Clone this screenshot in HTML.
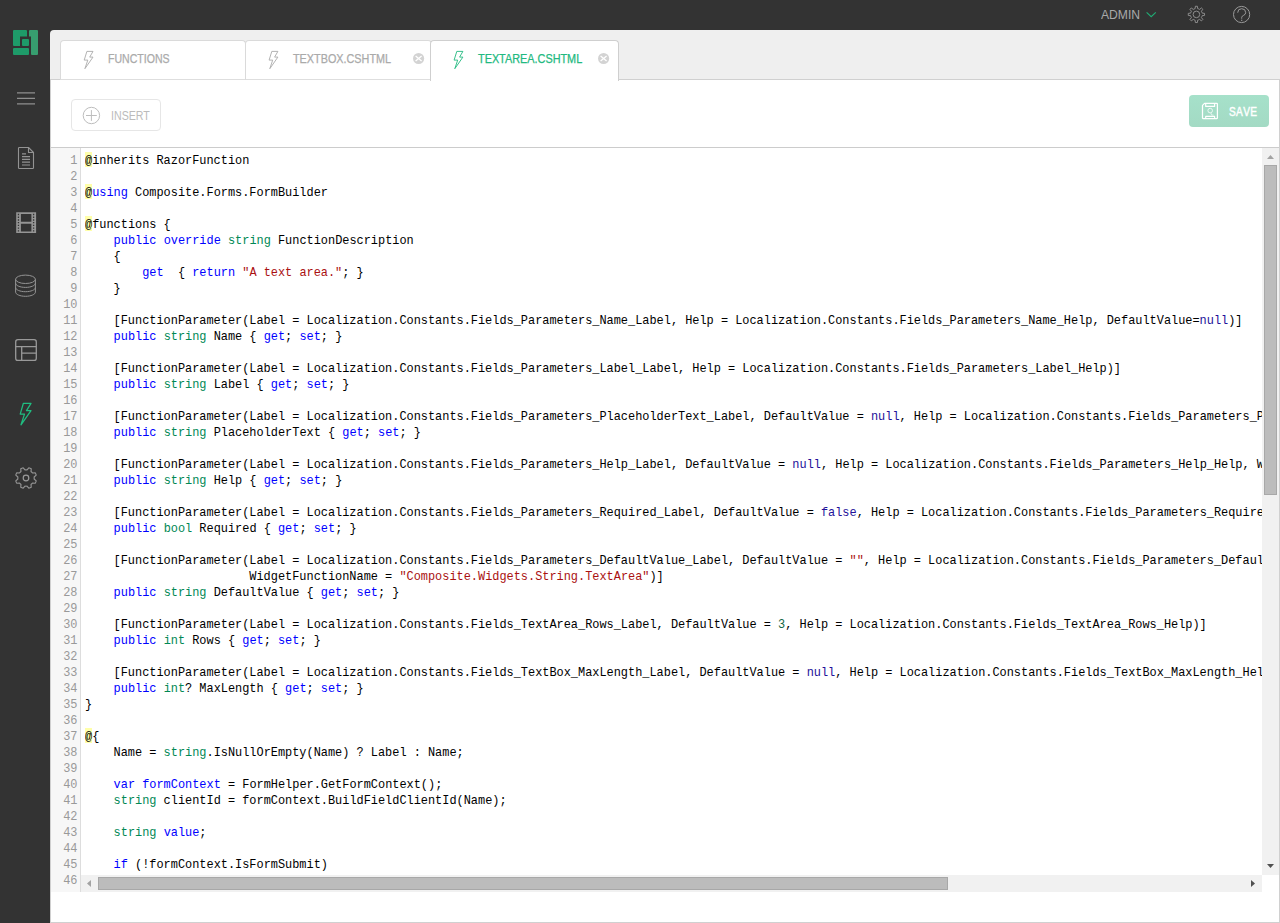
<!DOCTYPE html>
<html lang="en">
<head>
<meta charset="utf-8">
<title>C1 Console - TextArea.cshtml</title>
<style>
*{box-sizing:border-box;margin:0;padding:0}
html,body{width:1280px;height:923px;overflow:hidden;background:#333;font-family:"Liberation Sans",sans-serif}
#app{position:relative;width:1280px;height:923px;background:#333;overflow:hidden}
svg.ov{position:absolute;left:0;top:0;pointer-events:none}
.nar{display:inline-block;transform-origin:0 50%;white-space:nowrap}

/* top bar */
#admin{position:absolute;left:1101px;top:8px;font-size:12.5px;line-height:15px;color:#a9a9a9}
#admin .nar{transform:scaleX(.97)}

/* main area */
#main{position:absolute;left:50px;top:30px;width:1230px;height:893px;background:#efefef;border-top-left-radius:4px}
.tab{position:absolute;top:10px;height:40px;background:#fff;border:1px solid #dadada;border-bottom-color:#dedede;z-index:3;border-radius:4px 4px 0 0;font-size:12px;color:#aaa}
.tab .lbl{position:absolute;top:11px;line-height:14px;-webkit-text-stroke:.25px currentColor}
.tab .lbl .nar{transform:scaleX(.88)}
#t1{left:10px;width:186px}
#t2{left:195px;width:187px}
#t3{left:380px;width:189px;height:41px;color:#22b980;border-color:#cfcfcf;border-bottom:none;z-index:4}
#panel{position:absolute;left:0;top:49px;width:1230px;height:844px;background:#fff;border:1px solid #d0d0d0;z-index:2}

/* toolbar */
#insert{position:absolute;left:20px;top:19px;width:90px;height:32px;border:1px solid #e6e6e6;border-radius:4px;color:#bbb;font-size:12.5px}
#insert .lbl{position:absolute;left:39px;top:9px;line-height:15px}
#insert .nar{transform:scaleX(.852)}
#save{position:absolute;left:1138px;top:15px;width:80px;height:32px;border-radius:4px;background:linear-gradient(#a6e1ca,#a3dac4);color:#fff;font-size:12.5px;-webkit-text-stroke:.45px #fff}
#save .lbl{position:absolute;left:40px;top:10px;line-height:15px}
#save .nar{transform:scaleX(.81);letter-spacing:.4px;font-kerning:none}

/* editor */
#editor{position:absolute;left:0;top:67px;width:1228px;height:745px;border-top:1px solid #ccc;background:#fff;overflow:hidden;
  font-family:"Liberation Mono",monospace;font-size:11.917px;line-height:16px}
#gutter{position:absolute;left:0;top:0;width:30px;height:744px;background:#f7f7f7;border-right:1px solid #ddd}
#nums{position:absolute;left:0;top:5px;width:26.5px;text-align:right;color:#999}
#nums div{height:16px}
#code{position:absolute;left:34px;top:0;padding-top:5px;width:1177px;height:727px;overflow:hidden;color:#000}
.ln{height:16px;white-space:pre}
.k,.d{color:#00f}.t{color:#085}.s{color:#a11}.a{color:#219}.n{color:#164}
.at{background:linear-gradient(#ffa,#ffa) no-repeat 0 0/100% 15px;padding-top:2px}
#vs{z-index:2;position:absolute;left:1211px;top:0;width:17px;height:727px;background:#f1f1f1}
#vs .th{position:absolute;left:2px;top:17px;width:13px;height:330px;background:#bcbcbc;border:1px solid #a8a8a8}
#hs{z-index:2;position:absolute;left:30px;top:727px;width:1181px;height:17px;background:#f1f1f1}
#hs .th{position:absolute;left:17px;top:2px;width:850px;height:13px;background:#bcbcbc;border:1px solid #a8a8a8}
</style>
</head>
<body>
<div id="app">

<div id="admin"><span class="nar">ADMIN</span></div>

<div id="main">
  <div class="tab" id="t1"><div class="lbl" style="left:47px"><span class="nar">FUNCTIONS</span></div></div>
  <div class="tab" id="t2"><div class="lbl" style="left:47px"><span class="nar" style="transform:scaleX(.902)">TEXTBOX.CSHTML</span></div></div>
  <div class="tab" id="t3"><div class="lbl" style="left:47px"><span class="nar" style="transform:scaleX(.905)">TEXTAREA.CSHTML</span></div></div>
  <div id="panel">
    <div id="insert"><div class="lbl"><span class="nar">INSERT</span></div></div>
    <div id="save"><div class="lbl"><span class="nar">SAVE</span></div></div>
    <div id="editor">
      <div id="gutter"><div id="nums">
<div>1</div>
<div>2</div>
<div>3</div>
<div>4</div>
<div>5</div>
<div>6</div>
<div>7</div>
<div>8</div>
<div>9</div>
<div>10</div>
<div>11</div>
<div>12</div>
<div>13</div>
<div>14</div>
<div>15</div>
<div>16</div>
<div>17</div>
<div>18</div>
<div>19</div>
<div>20</div>
<div>21</div>
<div>22</div>
<div>23</div>
<div>24</div>
<div>25</div>
<div>26</div>
<div>27</div>
<div>28</div>
<div>29</div>
<div>30</div>
<div>31</div>
<div>32</div>
<div>33</div>
<div>34</div>
<div>35</div>
<div>36</div>
<div>37</div>
<div>38</div>
<div>39</div>
<div>40</div>
<div>41</div>
<div>42</div>
<div>43</div>
<div>44</div>
<div>45</div>
<div>46</div>
      </div></div>
      <div id="code">
<div class="ln"><span class="at">@</span>inherits RazorFunction</div>
<div class="ln">&nbsp;</div>
<div class="ln"><span class="at">@</span><span class="k">using</span> Composite.Forms.FormBuilder</div>
<div class="ln">&nbsp;</div>
<div class="ln"><span class="at">@</span>functions {</div>
<div class="ln">    <span class="k">public</span> <span class="k">override</span> <span class="t">string</span> FunctionDescription</div>
<div class="ln">    {</div>
<div class="ln">        <span class="k">get</span>  { <span class="k">return</span> <span class="s">"A text area."</span>; }</div>
<div class="ln">    }</div>
<div class="ln">&nbsp;</div>
<div class="ln">    [FunctionParameter(Label = Localization.Constants.Fields_Parameters_Name_Label, Help = Localization.Constants.Fields_Parameters_Name_Help, DefaultValue=<span class="a">null</span>)]</div>
<div class="ln">    <span class="k">public</span> <span class="t">string</span> Name { <span class="k">get</span>; <span class="k">set</span>; }</div>
<div class="ln">&nbsp;</div>
<div class="ln">    [FunctionParameter(Label = Localization.Constants.Fields_Parameters_Label_Label, Help = Localization.Constants.Fields_Parameters_Label_Help)]</div>
<div class="ln">    <span class="k">public</span> <span class="t">string</span> Label { <span class="k">get</span>; <span class="k">set</span>; }</div>
<div class="ln">&nbsp;</div>
<div class="ln">    [FunctionParameter(Label = Localization.Constants.Fields_Parameters_PlaceholderText_Label, DefaultValue = <span class="a">null</span>, Help = Localization.Constants.Fields_Parameters_PlaceholderText_Help)]</div>
<div class="ln">    <span class="k">public</span> <span class="t">string</span> PlaceholderText { <span class="k">get</span>; <span class="k">set</span>; }</div>
<div class="ln">&nbsp;</div>
<div class="ln">    [FunctionParameter(Label = Localization.Constants.Fields_Parameters_Help_Label, DefaultValue = <span class="a">null</span>, Help = Localization.Constants.Fields_Parameters_Help_Help, WidgetFunctionName = <span class="s">"Composite.Widgets.String.TextArea"</span>)]</div>
<div class="ln">    <span class="k">public</span> <span class="t">string</span> Help { <span class="k">get</span>; <span class="k">set</span>; }</div>
<div class="ln">&nbsp;</div>
<div class="ln">    [FunctionParameter(Label = Localization.Constants.Fields_Parameters_Required_Label, DefaultValue = <span class="a">false</span>, Help = Localization.Constants.Fields_Parameters_Required_Help)]</div>
<div class="ln">    <span class="k">public</span> <span class="t">bool</span> Required { <span class="k">get</span>; <span class="k">set</span>; }</div>
<div class="ln">&nbsp;</div>
<div class="ln">    [FunctionParameter(Label = Localization.Constants.Fields_Parameters_DefaultValue_Label, DefaultValue = <span class="s">""</span>, Help = Localization.Constants.Fields_Parameters_DefaultValue_Help,</div>
<div class="ln">                       WidgetFunctionName = <span class="s">"Composite.Widgets.String.TextArea"</span>)]</div>
<div class="ln">    <span class="k">public</span> <span class="t">string</span> DefaultValue { <span class="k">get</span>; <span class="k">set</span>; }</div>
<div class="ln">&nbsp;</div>
<div class="ln">    [FunctionParameter(Label = Localization.Constants.Fields_TextArea_Rows_Label, DefaultValue = <span class="n">3</span>, Help = Localization.Constants.Fields_TextArea_Rows_Help)]</div>
<div class="ln">    <span class="k">public</span> <span class="t">int</span> Rows { <span class="k">get</span>; <span class="k">set</span>; }</div>
<div class="ln">&nbsp;</div>
<div class="ln">    [FunctionParameter(Label = Localization.Constants.Fields_TextBox_MaxLength_Label, DefaultValue = <span class="a">null</span>, Help = Localization.Constants.Fields_TextBox_MaxLength_Help)]</div>
<div class="ln">    <span class="k">public</span> <span class="t">int</span>? MaxLength { <span class="k">get</span>; <span class="k">set</span>; }</div>
<div class="ln">}</div>
<div class="ln">&nbsp;</div>
<div class="ln"><span class="at">@</span>{</div>
<div class="ln">    Name = <span class="t">string</span>.IsNullOrEmpty(Name) ? Label : Name;</div>
<div class="ln">&nbsp;</div>
<div class="ln">    <span class="k">var</span> <span class="d">formContext</span> = FormHelper.GetFormContext();</div>
<div class="ln">    <span class="t">string</span> clientId = formContext.BuildFieldClientId(Name);</div>
<div class="ln">&nbsp;</div>
<div class="ln">    <span class="t">string</span> <span class="d">value</span>;</div>
<div class="ln">&nbsp;</div>
<div class="ln">    <span class="k">if</span> (!formContext.IsFormSubmit)</div>
<div class="ln">    {</div>
      </div>
      <div id="vs"><div class="th"></div></div>
      <div id="hs"><div class="th"></div></div>
    </div>
  </div>
</div>

<!-- icon overlay -->
<svg class="ov" width="1280" height="923" viewBox="0 0 1280 923" style="z-index:10">
  <!-- logo -->
  <g fill="#1e9b69">
    <path d="M14 30h12a1 1 0 0 1 1 1v5.500h-7v9.500h-6a1 1 0 0 1-1-1v-14a1 1 0 0 1 1-1z"/>
    <rect x="22" y="39" width="7" height="7" rx="1"/>
    <rect x="13" y="48" width="16" height="7" rx="1"/>
  </g>
  <path fill="#379e6f" d="M30 30h7a1 1 0 0 1 1 1v23a1 1 0 0 1-1 1h-5a1 1 0 0 1-1-1v-17.500h-2v-5.500a1 1 0 0 1 1-1z"/>
  <!-- hamburger -->
  <g stroke="#8f8f8f" stroke-width="1.3">
    <path d="M17 92.800h18M17 98.300h18M17 103.800h18"/>
  </g>
  <!-- document -->
  <g fill="none" stroke="#939393" stroke-width="1.1" stroke-linejoin="round">
    <path d="M19.300 147.500h9.200l5 5v15.200a.8.800 0 0 1-.8.800h-13.400a.8.800 0 0 1-.8-.8v-19.400a.8.800 0 0 1 .8-.8z"/>
    <path d="M28.500 147.500v5h5"/>
    <path d="M22 153.800h4M22 156.600h8M22 159.400h8M22 162.200h8M22 165h8" stroke-width="1.2"/>
  </g>
  <!-- film -->
  <path fill="#959595" fill-rule="evenodd" d="M16.200 212.200h19.900v20.900h-19.900zM20.900 214.100v7.700h10.500v-7.700zM20.900 223.800v7.700h10.500v-7.700zM17.80 213.85h1.3v1.3h-1.3zM17.80 216.60h1.3v1.3h-1.3zM17.80 219.35h1.3v1.3h-1.3zM17.80 222.05h1.3v1.3h-1.3zM17.80 224.80h1.3v1.3h-1.3zM17.80 227.55h1.3v1.3h-1.3zM17.80 230.30h1.3v1.3h-1.3zM32.95 213.85h1.3v1.3h-1.3zM32.95 216.60h1.3v1.3h-1.3zM32.95 219.35h1.3v1.3h-1.3zM32.95 222.05h1.3v1.3h-1.3zM32.95 224.80h1.3v1.3h-1.3zM32.95 227.55h1.3v1.3h-1.3zM32.95 230.30h1.3v1.3h-1.3z"/>
  <!-- database -->
  <g fill="none" stroke="#939393" stroke-width="1">
    <ellipse cx="25.500" cy="279.300" rx="9.900" ry="4.200"/>
    <path d="M15.600 279.300v12.800c0 2.300 4.400 4.200 9.900 4.200s9.900-1.900 9.900-4.200v-12.800"/>
    <path d="M15.600 283.200c0 2.300 4.400 4.200 9.900 4.200s9.900-1.900 9.900-4.200"/>
    <path d="M15.600 287.500c0 2.300 4.400 4.200 9.900 4.200s9.900-1.900 9.900-4.200"/>
  </g>
  <!-- layout -->
  <g fill="none" stroke="#999" stroke-width="1.3">
    <rect x="15.700" y="339.700" width="20.600" height="20.700" rx="2.200"/>
    <path d="M15.700 346.700h20.600M21.700 346.700v13.700M21.700 353.200h14.600"/>
  </g>
  <!-- lightning (active) -->
  <path d="M23.400 403.300h7.600l-4.500 7.300h4.500l-10 14.200 3.500-10.700h-4.300z" fill="none" stroke="#20bd80" stroke-width="1.25" stroke-linejoin="round"/>
  <!-- tab icons -->
  <g fill="none" stroke-width=".9">
    <path id="bolt" d="M86.900 51.400h6.100l-3.300 5.700h3.300l-8.100 11.600 2.900-8.600h-3.600z" stroke="#aaa"/>
    <path d="M86.900 51.400h6.100l-3.300 5.700h3.300l-8.100 11.600 2.900-8.600h-3.600z" stroke="#aaa" transform="translate(184.900 0)"/>
    <path d="M86.900 51.400h6.100l-3.300 5.700h3.300l-8.100 11.600 2.900-8.600h-3.600z" stroke="#22b980" transform="translate(369.900 0)"/>
  </g>
  <!-- tab close -->
  <g>
    <circle cx="418.600" cy="58.500" r="5.550" fill="#d3d3d3"/>
    <path d="M415.600 55.900l6 5.200M421.600 55.900l-6 5.200" stroke="#fff" stroke-width="1.300"/>
    <circle cx="603.600" cy="58.500" r="5.550" fill="#d3d3d3"/>
    <path d="M600.600 55.900l6 5.200M606.600 55.900l-6 5.200" stroke="#fff" stroke-width="1.300"/>
  </g>
  <!-- admin chevron -->
  <path d="M1146.600 12.300l4.600 4.300 4.600-4.300" fill="none" stroke="#20ab74" stroke-width="1.15"/>
  <!-- help -->
  <g fill="none" stroke="#9a9a9a" stroke-width="1">
    <circle cx="1241.600" cy="14.500" r="8.100"/>
    <path d="M1237.700 12.700a4 4 0 0 1 8 0c0 2.800-4 2.500-4 4.700v1.300"/>
    <path d="M1241.700 19.800v1.300" stroke-width="1.100"/>
  </g>
  <!-- insert plus -->
  <g fill="none" stroke="#bdbdbd" stroke-width="1">
    <circle cx="91.400" cy="115.500" r="8.200"/>
    <path d="M86 115.500h10.800M91.400 110.100v10.800"/>
  </g>
  <!-- save floppy -->
  <g fill="none" stroke="#fff" stroke-width="1.25" stroke-linejoin="round">
    <path d="M1204.500 103.400h12.300a.6.600 0 0 1 .6.600v13.900a.6.600 0 0 1-.6.600h-13.700a.6.600 0 0 1-.6-.6v-12.500z"/>
    <path d="M1205.700 103.400v3h8.900v-3M1205.700 118.500v-2.100h8.900v2.100" stroke-width="1.15"/>
    <circle cx="1210.200" cy="110.600" r="2.300" stroke-width=".9" opacity=".85"/>
    <path d="M1210.900 112.800l.6 2.200h2" stroke-width=".9" opacity=".7"/>
  </g>
  <!-- scroll arrows -->
  <path d="M1267 159l3.500-4 3.500 4z" fill="#a3a3a3"/>
  <path d="M1267 864l3.500 4 3.500-4z" fill="#505050"/>
  <path d="M1251 880l4 3.500-4 3.500z" fill="#505050"/>
  <path d="M91 880l-4 3.500 4 3.500z" fill="#a3a3a3"/>
  <!-- sidebar gear -->
  <path d="M26.00 469.80 L27.02 469.86 L28.82 467.78 A10.60 10.60 0 0 1 31.23 468.78 L31.03 471.52 L31.80 472.20 L32.48 472.97 L35.22 472.77 A10.60 10.60 0 0 1 36.22 475.18 L34.14 476.98 L34.20 478.00 L34.14 479.02 L36.22 480.82 A10.60 10.60 0 0 1 35.22 483.23 L32.48 483.03 L31.80 483.80 L31.03 484.48 L31.23 487.22 A10.60 10.60 0 0 1 28.82 488.22 L27.02 486.14 L26.00 486.20 L24.98 486.14 L23.18 488.22 A10.60 10.60 0 0 1 20.77 487.22 L20.97 484.48 L20.20 483.80 L19.52 483.03 L16.78 483.23 A10.60 10.60 0 0 1 15.78 480.82 L17.86 479.02 L17.80 478.00 L17.86 476.98 L15.78 475.18 A10.60 10.60 0 0 1 16.78 472.77 L19.52 472.97 L20.20 472.20 L20.97 471.52 L20.77 468.78 A10.60 10.60 0 0 1 23.18 467.78 L24.98 469.86 L26.00 469.80Z" fill="none" stroke="#949494" stroke-width="1.150" stroke-linejoin="round"/>
  <circle cx="26" cy="478" r="2.8" fill="none" stroke="#9a9a9a" stroke-width="1.2"/>
  <!-- top gear -->
  <path d="M1195.10 8.65 L1195.40 6.26 L1197.40 6.26 L1197.70 8.65 A5.90 5.90 0 0 1 1199.55 9.41 L1201.45 7.94 L1202.86 9.35 L1201.39 11.25 A5.90 5.90 0 0 1 1202.15 13.10 L1204.54 13.40 L1204.54 15.40 L1202.15 15.70 A5.90 5.90 0 0 1 1201.39 17.55 L1202.86 19.45 L1201.45 20.86 L1199.55 19.39 A5.90 5.90 0 0 1 1197.70 20.15 L1197.40 22.54 L1195.40 22.54 L1195.10 20.15 A5.90 5.90 0 0 1 1193.25 19.39 L1191.35 20.86 L1189.94 19.45 L1191.41 17.55 A5.90 5.90 0 0 1 1190.65 15.70 L1188.26 15.40 L1188.26 13.40 L1190.65 13.10 A5.90 5.90 0 0 1 1191.41 11.25 L1189.94 9.35 L1191.35 7.94 L1193.25 9.41 A5.90 5.90 0 0 1 1195.10 8.65Z" fill="none" stroke="#959595" stroke-width=".9" stroke-linejoin="round"/>
  <circle cx="1196.400" cy="14.400" r="3.300" fill="none" stroke="#959595" stroke-width=".9"/>
</svg>

</div>
</body>
</html>
